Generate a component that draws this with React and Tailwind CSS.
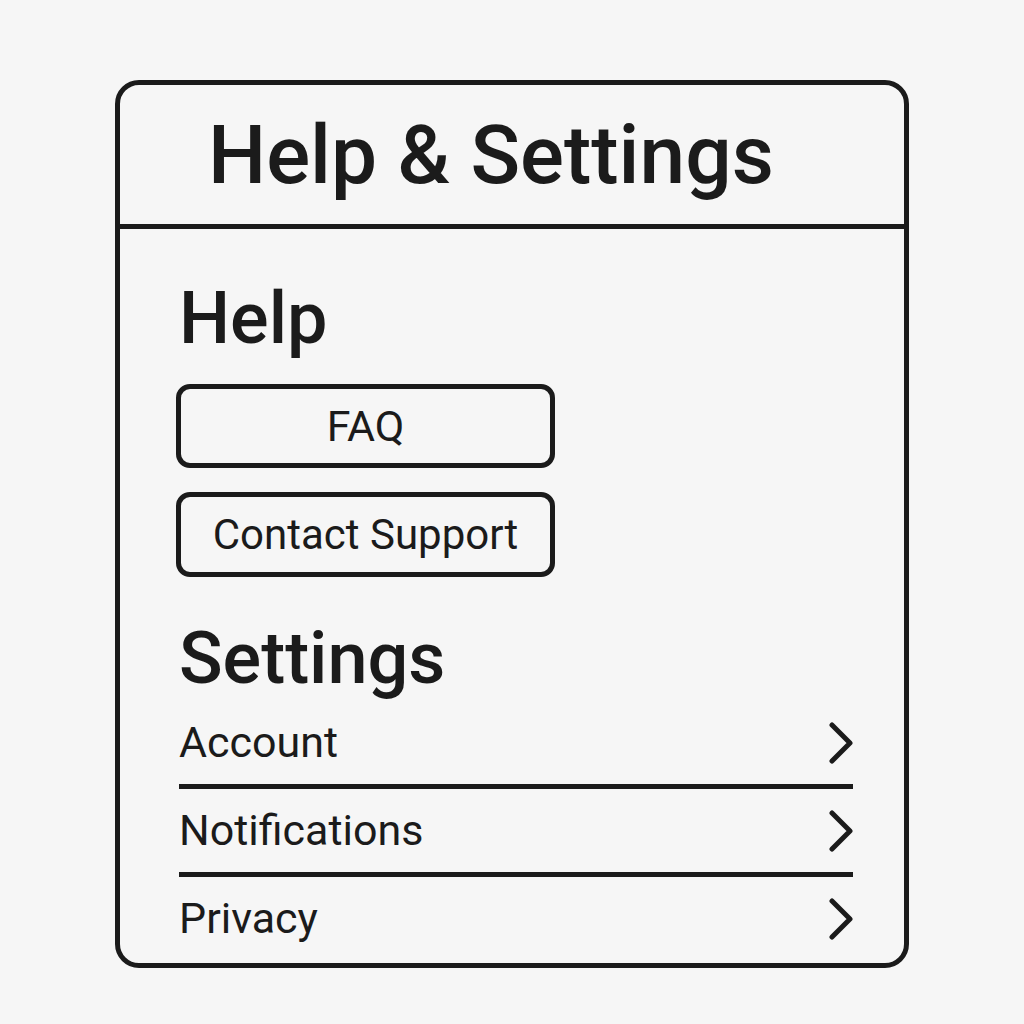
const settingsRows = ['Account', 'Notifications', 'Privacy'];

function Chevron() {
  return (
    <svg width="26" height="44" viewBox="0 0 26 44" fill="none" className="shrink-0">
      <polyline points="5,4 23,22 5,40" stroke="#1b1b1b" strokeWidth="5" strokeLinecap="round" strokeLinejoin="round" />
    </svg>
  );
}

export default function App() {
  return (
    <div className="w-[1024px] h-[1024px] bg-[#f6f6f6] pt-[80px] pl-[115px] font-['Roboto',sans-serif] text-[#1b1b1b]">
      <div className="w-[794px] h-[888px] border-[5px] border-[#1b1b1b] rounded-[24px] flex flex-col">
        {/* Header */}
        <div className="h-[144px] shrink-0 border-b-[5px] border-[#1b1b1b] flex items-center pl-[88px]">
          <h1 className="text-[82px] leading-none font-medium">Help &amp; Settings</h1>
        </div>

        {/* Body */}
        <div className="pl-[59px] pr-[51px] flex flex-col">
          <h2 className="mt-[54px] text-[72px] leading-none font-medium">Help</h2>

          <div className="mt-[29px] -ml-[3px] flex flex-col gap-[24px]">
            <button className="w-[379px] h-[84px] border-[5px] border-[#1b1b1b] rounded-[14px] text-[43px] leading-none flex items-center justify-center">
              FAQ
            </button>
            <button className="w-[379px] h-[85px] border-[5px] border-[#1b1b1b] rounded-[14px] text-[42px] leading-none flex items-center justify-center">
              Contact Support
            </button>
          </div>

          <h2 className="mt-[46px] text-[72px] leading-none font-medium">Settings</h2>

          <div className="mt-[6px] flex flex-col">
            {settingsRows.map((label, i) => (
              <div
                key={label}
                className={`flex items-center justify-between ${i < settingsRows.length - 1 ? 'h-[88px] border-b-[5px] border-[#1b1b1b]' : 'h-[83px]'}`}
              >
                <span className="text-[43px] leading-none">{label}</span>
                <Chevron />
              </div>
            ))}
          </div>
        </div>
      </div>
    </div>
  );
}
